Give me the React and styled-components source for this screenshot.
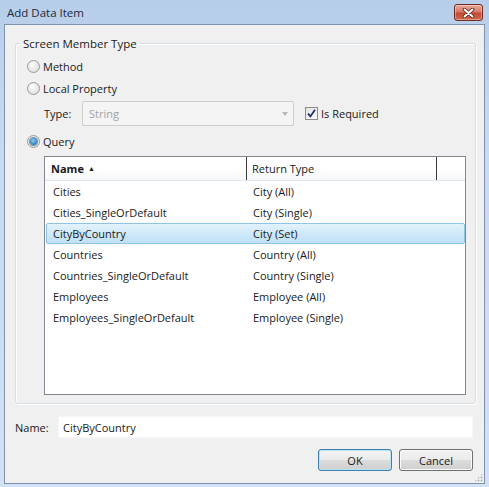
import styled, { createGlobalStyle } from "styled-components"

const GlobalStyle = createGlobalStyle`
  html, body { margin:0; padding:0; }
  body { background:#c6d9ef; }
`

const Window = styled.div`
  width:489px;
  height:487px;
  box-sizing:border-box;
  padding:0 4px 3px 4px;
  display:flex;
  flex-direction:column;
  background:linear-gradient(180deg,#b7cee9 0%,#c8daf0 30%,#d2e1f3 100%);
  font-family:"Open Sans","Noto Sans",sans-serif;
  font-size:11px;
  color:#1a1a1a;
`
const TitleBar = styled.div`
  height:24px;
  display:flex;
  align-items:flex-start;
  justify-content:space-between;
  padding:0 2px 0 3px;
`
const Title = styled.div`
  line-height:25px;
  font-size:11.5px;
  color:#1c2a3c;
`
const CloseButton = styled.div`
  margin-top:4px;
  width:29px;
  height:17px;
  box-sizing:border-box;
  border:1px solid #6f2b21;
  border-radius:3px;
  background:linear-gradient(180deg,#e9a99b 0%,#d77a68 45%,#c24a33 55%,#cf6a4f 100%);
  box-shadow:inset 0 0 0 1px rgba(255,255,255,.35);
  display:flex;
  align-items:center;
  justify-content:center;
`
const Client = styled.div`
  flex:1;
  position:relative;
  display:flex;
  flex-direction:column;
  background:#f0f0f0;
  border:1px solid #7d92ad;
  padding:11px 8px 0 10px;
`
const Group = styled.fieldset`
  margin:0;
  padding:0 9px 8px 4px;
  min-width:0;
  border:1px solid #d5dfe5;
  border-radius:3px;
  box-shadow:inset 1px 1px 0 #fff, 1px 1px 0 #fff;
`
const Legend = styled.legend`
  padding:0 3px;
  line-height:15px;
  font-size:11.5px;
`
const GroupBody = styled.div`
  display:flex;
  flex-direction:column;
  padding:5px 0 0 7px;
`
const OptionRow = styled.label`
  height:20px;
  display:flex;
  align-items:center;
  gap:3px;
  margin-top:${p => p.$gap || 0}px;
`
const Radio = styled.span`
  width:13px;
  height:13px;
  box-sizing:border-box;
  border-radius:50%;
  border:1px solid #9a9a9a;
  background:radial-gradient(circle at 40% 35%,#fdfdfd 0%,#e6e6e6 60%,#d6d6d6 100%);
  display:flex;
  align-items:center;
  justify-content:center;
  &::after{
    content:"";
    display:${p => (p.$on ? "block" : "none")};
    width:7px;
    height:7px;
    border-radius:50%;
    background:radial-gradient(circle at 45% 40%,#8fd3f7 0%,#3b8fc8 55%,#1f5b8c 100%);
    box-shadow:0 0 0 1px #6d8fae;
  }
`
const TypeRow = styled.div`
  height:25px;
  margin-top:3px;
  padding-left:17px;
  display:flex;
  align-items:center;
`
const TypeLabel = styled.span`
  width:38px;
`
const Combo = styled.div`
  width:212px;
  height:25px;
  box-sizing:border-box;
  border:1px solid #cdcdcd;
  border-radius:2px;
  background:#f4f4f4;
  color:#a3a3a3;
  display:flex;
  align-items:center;
  justify-content:space-between;
  padding:0 5px 0 6px;
`
const Arrow = styled.span`
  width:0;
  height:0;
  border-left:3.5px solid transparent;
  border-right:3.5px solid transparent;
  border-top:4px solid #b8b8b8;
`
const CheckLabel = styled.label`
  margin-left:11px;
  display:flex;
  align-items:center;
  gap:3px;
`
const CheckBox = styled.span`
  width:13px;
  height:13px;
  box-sizing:border-box;
  border:1px solid #8c8c8c;
  background:linear-gradient(135deg,#e3e3e3 0%,#fafafa 100%);
  display:flex;
  align-items:center;
  justify-content:center;
`
const ListBox = styled.div`
  margin:5px 0 0 17px;
  height:239px;
  box-sizing:border-box;
  border:1px solid #828790;
  background:#fff;
  display:flex;
  flex-direction:column;
`
const Columns = styled.div`
  display:grid;
  grid-template-columns:202px 190px 1fr;
`
const Header = styled(Columns)`
  height:24px;
  box-sizing:border-box;
  border-bottom:1px solid #e3e6ea;
  background:linear-gradient(180deg,#ffffff 0%,#ffffff 50%,#f6f7f9 100%);
`
const HeadCell = styled.div`
  display:flex;
  align-items:center;
  gap:4px;
  padding-left:${p => p.$pad}px;
  border-right:${p => (p.$last ? "none" : "1px solid #3a3a3a")};
  font-weight:${p => (p.$bold ? 700 : 400)};
`
const SortMark = styled.span`
  font-size:7px;
  line-height:1;
`
const Row = styled(Columns)`
  height:21px;
  box-sizing:border-box;
  align-items:center;
  margin:0 0 0 1px;
  border:1px solid ${p => (p.$sel ? "#8ec4e8" : "transparent")};
  border-radius:2px;
  background:${p => (p.$sel ? "linear-gradient(180deg,#e4f3fc 0%,#cfe9f9 50%,#bfe0f5 100%)" : "transparent")};
`
const Cell = styled.div`
  padding-left:${p => p.$pad}px;
  white-space:nowrap;
`
const NameRow = styled.div`
  margin-top:12px;
  padding-right:3px;
  height:22px;
  display:flex;
  align-items:center;
`
const NameLabel = styled.span`
  width:43px;
`
const NameInput = styled.div`
  flex:1;
  height:22px;
  box-sizing:border-box;
  border:1px solid #f7f7f7;
  background:#fff;
  display:flex;
  align-items:center;
  padding-left:4px;
`
const ButtonRow = styled.div`
  margin-top:11px;
  padding-right:3px;
  display:flex;
  justify-content:flex-end;
  gap:7px;
`
const Button = styled.div`
  width:74px;
  height:22px;
  box-sizing:border-box;
  border:1px solid ${p => (p.$def ? "#3c7fb1" : "#707070")};
  border-radius:3px;
  background:linear-gradient(180deg,#f2f2f2 0%,#ebebeb 50%,#dddddd 51%,#cfcfcf 100%);
  box-shadow:inset 0 0 0 1px ${p => (p.$def ? "#b7e4f4" : "#fbfbfb")};
  display:flex;
  align-items:center;
  justify-content:center;
`
const Grip = styled.div`
  position:absolute;
  right:1px;
  bottom:1px;
  width:9px;
  height:9px;
  background-image:radial-gradient(circle,#a9b6c4 0.8px,transparent 1.2px);
  background-size:3px 3px;
  clip-path:polygon(100% 0,100% 100%,0 100%);
`

const items = [
  ["Cities", "City (All)"],
  ["Cities_SingleOrDefault", "City (Single)"],
  ["CityByCountry", "City (Set)"],
  ["Countries", "Country (All)"],
  ["Countries_SingleOrDefault", "Country (Single)"],
  ["Employees", "Employee (All)"],
  ["Employees_SingleOrDefault", "Employee (Single)"],
]

const App = () => {
  const selected = "CityByCountry"
  return (
    <>
      <GlobalStyle />
      <Window>
        <TitleBar>
          <Title>Add Data Item</Title>
          <CloseButton>
            <svg width="13" height="10" viewBox="0 0 13 10">
              <path d="M2.5 1.5 L10.5 8.5 M10.5 1.5 L2.5 8.5" stroke="#5a1f16" strokeWidth="3.6" strokeLinecap="round" />
              <path d="M2.5 1.5 L10.5 8.5 M10.5 1.5 L2.5 8.5" stroke="#fff" strokeWidth="2" strokeLinecap="round" />
            </svg>
          </CloseButton>
        </TitleBar>
        <Client>
          <Group>
            <Legend>Screen Member Type</Legend>
            <GroupBody>
              <OptionRow>
                <Radio />
                Method
              </OptionRow>
              <OptionRow $gap={2}>
                <Radio />
                Local Property
              </OptionRow>
              <TypeRow>
                <TypeLabel>Type:</TypeLabel>
                <Combo>
                  String
                  <Arrow />
                </Combo>
                <CheckLabel>
                  <CheckBox>
                    <svg width="9" height="9" viewBox="0 0 9 9">
                      <path d="M1 4.6 L3.4 7.4 L8 0.8" fill="none" stroke="#1d2f6b" strokeWidth="1.8" />
                    </svg>
                  </CheckBox>
                  Is Required
                </CheckLabel>
              </TypeRow>
              <OptionRow $gap={5}>
                <Radio $on />
                Query
              </OptionRow>
              <ListBox>
                <Header>
                  <HeadCell $pad={6} $bold>
                    Name <SortMark>▲</SortMark>
                  </HeadCell>
                  <HeadCell $pad={5}>Return Type</HeadCell>
                  <HeadCell $last />
                </Header>
                {items.map(([name, type]) => (
                  <Row key={name} $sel={name === selected}>
                    <Cell $pad={6}>{name}</Cell>
                    <Cell $pad={4}>{type}</Cell>
                  </Row>
                ))}
              </ListBox>
            </GroupBody>
          </Group>
          <NameRow>
            <NameLabel>Name:</NameLabel>
            <NameInput>CityByCountry</NameInput>
          </NameRow>
          <ButtonRow>
            <Button $def>OK</Button>
            <Button>Cancel</Button>
          </ButtonRow>
          <Grip />
        </Client>
      </Window>
    </>
  )
}

export default App
